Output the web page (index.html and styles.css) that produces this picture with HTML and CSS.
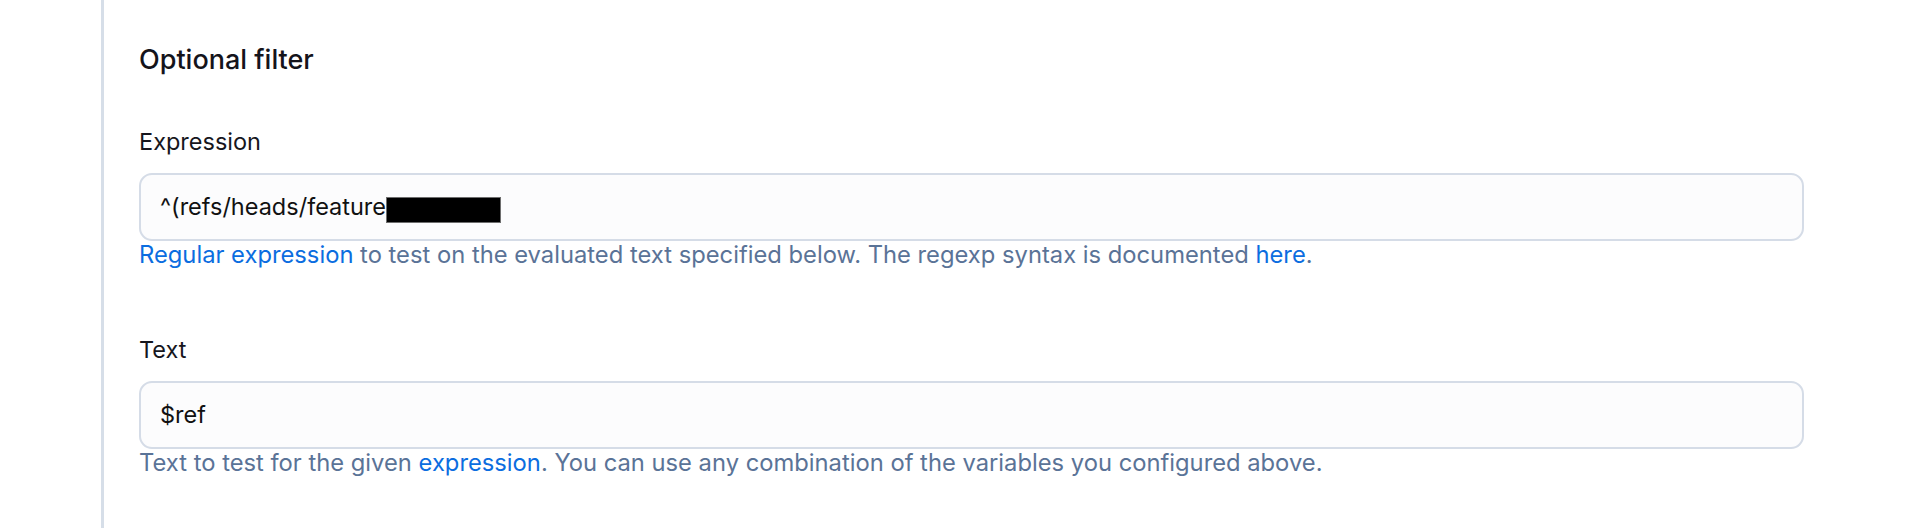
FILE: index.html
```html
<!DOCTYPE html>
<html>
<head>
<meta charset="utf-8">
<link rel="stylesheet" href="styles.css">
</head>
<body>
<div class="panel">
  <h2 class="title">Optional filter</h2>
  <div class="group">
    <label class="label">Expression</label>
    <div class="field">^(refs/heads/feature<span class="redact"></span></div>
    <p class="help"><a href="#">Regular expression</a> to test on the evaluated text specified below. The regexp syntax is documented <a href="#">here</a>.</p>
  </div>
  <div class="group group-second">
    <label class="label">Text</label>
    <div class="field">$ref</div>
    <p class="help">Text to test for the given <a href="#">expression</a>. You can use any combination of the variables you configured above.</p>
  </div>
</div>
</body>
</html>
```
FILE: styles.css
```css
html, body {
  margin: 0;
  padding: 0;
  background: #ffffff;
}
body {
  font-family: Inter, "Noto Sans", sans-serif;
  color: #16161d;
  height: 528px;
  overflow: hidden;
}
.panel {
  margin-left: 101px;
  margin-right: 112px;
  border-left: 3px solid #d6dee8;
  padding-left: 35px;
  padding-top: 44px;
  height: 528px;
  box-sizing: border-box;
}
.title {
  margin: 0;
  font-size: 27px;
  line-height: 32px;
  font-weight: 500;
  color: #14141b;
}
.group {
  margin-top: 52px;
}
.group-second {
  margin-top: 67px;
}
.label {
  display: block;
  font-size: 23.5px;
  line-height: 28px;
  font-weight: 400;
  color: #16161d;
  margin-bottom: 17px;
}
.field {
  height: 68px;
  box-sizing: border-box;
  border: 2px solid #d5dce7;
  border-radius: 13px;
  background: #fcfcfd;
  padding-left: 19px;
  font-size: 23.5px;
  line-height: 64px;
  color: #111111;
  white-space: nowrap;
}
.redact {
  display: inline-block;
  width: 115px;
  height: 26px;
  background: #000;
  box-sizing: border-box;
  border: 1px solid #6e6e6e;
  vertical-align: -8px;
}
.help {
  margin: 0;
  font-size: 23.75px;
  line-height: 28px;
  color: #5a7397;
}
.help a {
  color: #0b6de0;
  text-decoration: none;
}
```
